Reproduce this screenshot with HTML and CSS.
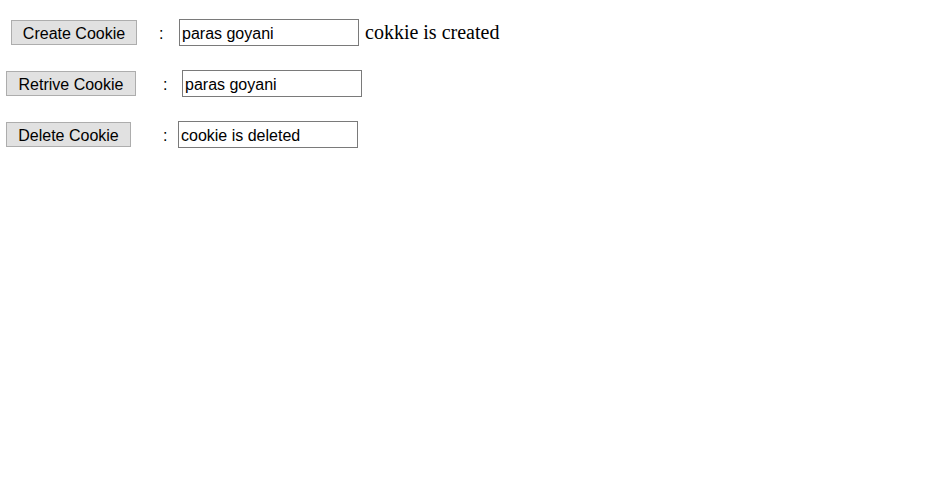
FILE: index.html
```html
<!DOCTYPE html>
<html>
<head>
<meta charset="utf-8">
<link rel="stylesheet" href="styles.css">
</head>
<body>
<div class="page">
  <div class="row row1">
    <button class="btn btn-create">Create Cookie</button>
    <span class="colon c1">:</span>
    <input class="field" type="text" value="paras goyani">
    <span class="msg">cokkie is created</span>
  </div>
  <div class="row row2">
    <button class="btn btn-retrive">Retrive Cookie</button>
    <span class="colon c2">:</span>
    <input class="field" type="text" value="paras goyani">
  </div>
  <div class="row row3">
    <button class="btn btn-delete">Delete Cookie</button>
    <span class="colon c3">:</span>
    <input class="field" type="text" value="cookie is deleted">
  </div>
</div>
</body>
</html>
```
FILE: styles.css
```css
html, body {
  margin: 0;
  padding: 0;
  background: #ffffff;
}
.page {
  padding-top: 19px;
  display: flex;
  flex-direction: column;
  gap: 24px;
  font-family: "Liberation Sans", Arial, sans-serif;
}
.row {
  display: flex;
  align-items: center;
  height: 27px;
}
.btn {
  box-sizing: border-box;
  height: 25px;
  margin: 0;
  padding: 2px 0 0 0;
  background: #e1e1e1;
  border: 1px solid #adadad;
  border-radius: 0;
  font-family: "Liberation Sans", Arial, sans-serif;
  font-size: 16px;
  color: #000;
}
.btn-create { width: 126px; margin-left: 11px; }
.btn-retrive { width: 130px; margin-left: 6px; }
.btn-delete { width: 125px; margin-left: 6px; }
.colon {
  font-size: 16px;
  color: #000;
  width: 4px;
  padding-top: 2px;
}
.c1 { margin-left: 22px; margin-right: 16px; }
.c2 { margin-left: 27px; margin-right: 15px; }
.c3 { margin-left: 32px; margin-right: 11px; }
.field {
  box-sizing: border-box;
  width: 180px;
  height: 27px;
  margin: 0;
  padding: 2px 2px 0 2px;
  border: 1px solid #7a7a7a;
  border-radius: 0;
  font-family: "Liberation Sans", Arial, sans-serif;
  font-size: 16px;
  color: #000;
  outline: none;
}
.msg {
  margin-left: 6px;
  font-family: "Liberation Serif", "Times New Roman", serif;
  font-size: 20px;
  color: #000;
}
```
